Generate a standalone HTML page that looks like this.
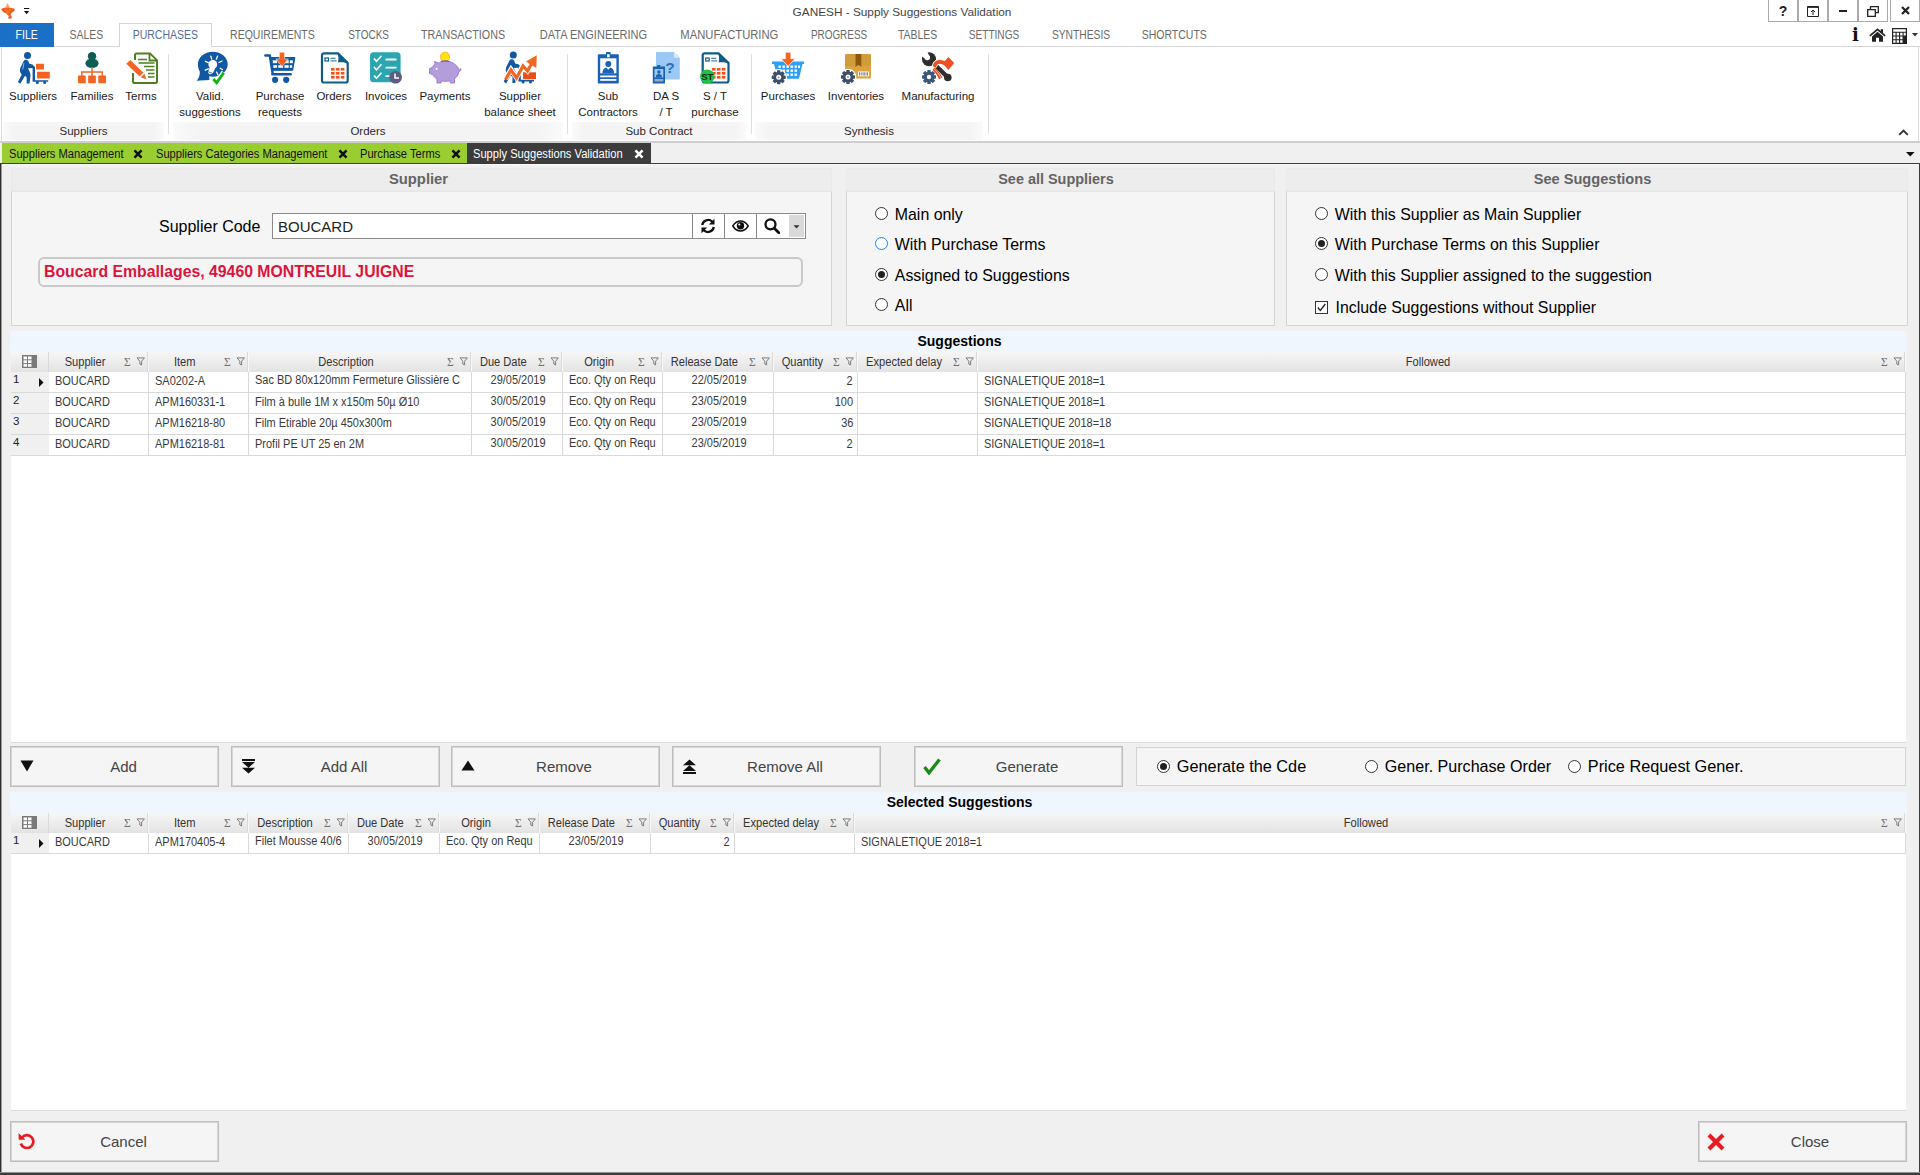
<!DOCTYPE html>
<html lang="en">
<head>
<meta charset="utf-8">
<title>GANESH - Supply Suggestions Validation</title>
<style>
*{box-sizing:border-box;margin:0;padding:0}
html,body{width:1920px;height:1175px;overflow:hidden;background:#f0f0f0;font-family:"Liberation Sans",sans-serif;color:#000}
.abs{position:absolute}
#app{position:relative;width:1920px;height:1175px;overflow:hidden;background:#f0f0f0}
/* title bar */
#titlebar{left:0;top:0;width:1920px;height:23px;background:#fff}
#title{left:0;top:5px;width:1804px;text-align:center;font-size:11.8px;color:#444;white-space:nowrap}
.wbtn{top:-1px;height:23px;width:30px;border:1px solid #ababab;background:#fff}
/* ribbon tabs */
#tabrow{left:0;top:23px;width:1920px;height:24px;background:#fff;border-bottom:1px solid #d4d4d4}
.rtab{top:0;height:24px;font-size:12px;color:#6a6a6a;white-space:nowrap;line-height:25px;text-align:center}
.rtab span{display:inline-block;transform:scaleX(.875);transform-origin:center}
#filetab{left:0;top:0;width:54px;height:24px;background:#1a6fc6;color:#fff}
#purtab{left:119px;top:0;width:93px;height:25px;background:#fff;border:1px solid #d4d4d4;border-bottom:none;color:#5a6d9a;line-height:23px}
/* ribbon body */
#ribbon{left:0;top:47px;width:1920px;height:94px;background:#fff}
#ribshadow{left:0;top:141px;width:1920px;height:2px;background:#cfcfcf}
.rbtn{top:0;text-align:center;font-size:11.5px;line-height:16px;color:#1a1a1a;white-space:nowrap}
.rbtn .lbl{position:absolute;left:-40px;right:-40px;top:41px;text-align:center}
.rbtn svg{position:absolute;top:5px;left:50%;margin-left:-16px;width:32px;height:32px}
.rgrp{top:75px;height:18px;background:linear-gradient(90deg,#fbfbfb,#f4f4f4 6%,#f4f4f4 94%,#fbfbfb);font-size:11.5px;line-height:19px;text-align:center;color:#2a2a2a}
.rsep{top:7px;width:1px;height:80px;background:#dedede}
/* doc tabs */
#doctabs{left:0;top:143px;width:1920px;height:21px;background:#f0f0f0;border-bottom:1px solid #3c3c3c}
.dtab{top:0;height:20px;background:#9acd32;font-size:12px;line-height:23px;white-space:nowrap;padding-left:7px;color:#111}
.dtab.act{background:#3c3c3c;color:#fff}
.dtab svg{position:absolute;top:6px;width:10px;height:10px;margin-left:.5px}
.dtab .sx{transform:scaleX(.928)}
/* panels */
.gph{padding-right:6px;background:#ededed;border:1px solid #eaeaea;font-weight:bold;font-size:14.8px;color:#646464;text-align:center;line-height:21px;height:23px}
.gpb{background:#f5f5f5;border:1px solid #d4d4d4;border-top-color:#e6e6e6}
.rad{width:13px;height:13px;border:1px solid #333;border-radius:50%;background:#fff}
.rad.on::after{content:"";position:absolute;left:2px;top:2px;width:7px;height:7px;border-radius:50%;background:#222}
.rl{font-size:15.9px;white-space:nowrap;line-height:22px;color:#000}
/* grids */
.gtitle{background:#eff6fe;font-weight:bold;font-size:14px;text-align:center;line-height:21px;height:21px;color:#000}
.ghead{height:20px;background:linear-gradient(#f6f6f6,#e3e3e3)}
.gh{top:0;height:20px;font-size:12px;line-height:20px;color:#333;white-space:nowrap;border-right:1px solid #f8f8f8;box-shadow:inset -2px 0 0 -1px #dadada}
.gh .t{position:absolute;top:0;left:0;text-align:center}
.gh svg{position:absolute;top:5px;width:22px;height:9px;right:2px}
.sx{display:inline-block;transform:scaleX(.915);transform-origin:left center}
.gh .sx,.gc.c .sx{transform-origin:center}
.gh .sx{transform:scaleX(.925)}
.gc.r .sx{transform-origin:right center}
.gbody{background:#fff;border-bottom:1px solid #dcdcdc}
.grow{left:0;height:21px;border-bottom:1px solid #d9d9d9}
.gc{top:0;height:20px;font-size:12px;line-height:19px;color:#3a3a3a;white-space:nowrap;overflow:hidden;border-right:1px solid #d9d9d9;padding:0 6px}
.gc.c{text-align:center;line-height:17px;padding:0 0 0 2px}
.gc.u{line-height:17px}
.gc.r{text-align:right;padding-right:4px}
.gc.rh{background:#f0f0f0;border-right:none;padding:0 0 0 2px;font-size:11.5px;line-height:14px;color:#222}
/* buttons */
.btn{height:41px;border:1px solid #bdbdbd;background:#f5f5f5;font-size:15px;color:#444;text-align:center;line-height:39px;white-space:nowrap;box-shadow:inset 0 0 0 1px #d6d6d6}
.btn svg{position:absolute}
</style>
</head>
<body>
<div id="app">

<!-- TITLE BAR -->
<div id="titlebar" class="abs">
  <svg class="abs" style="left:0;top:0;width:17px;height:21px" viewBox="0 0 17 21"><path d="M7.500 2.800L10.200 8.300H4.900z" fill="#f6a77f"/><path d="M1 9C2.800 7.800 4.800 7.600 7.500 7.700 10.200 7.600 12.800 7.800 15 9 14.600 10.800 13.500 12 12 12.800 11 13.500 10.500 14.300 10.700 15.200 11.700 15.800 12.200 17 11.500 18.200 10.500 19.200 8.800 19 8.200 18 8 17 8.600 16.300 9.600 16.500 8 15.500 7 14.300 6.500 13.500 4.500 13.300 2.300 11.800 1 9z" fill="#f2601e"/><path d="M5 10h1.600M8.800 10h1.600M6.500 12h2.500" stroke="#ffb347" stroke-width=".6"/></svg>
  <svg class="abs" style="left:24px;top:8px;width:6px;height:7px" viewBox="0 0 6 7"><path d="M0 0h5.200v1.100H0zM0 3h5.200L2.600 6.300z" fill="#111"/></svg>
  <div id="title" class="abs">GANESH - Supply Suggestions Validation</div>
  <div class="abs wbtn" style="left:1768px;text-align:center;font-weight:bold;font-size:14px;line-height:22px;color:#222">?</div>
  <div class="abs wbtn" style="left:1798px"><svg class="abs" style="left:8px;top:6px;width:12px;height:11px" viewBox="0 0 12 11"><path d="M.5.5h11v10H.5z" fill="none" stroke="#222"/><path d="M.5 1.200h11" stroke="#222" stroke-width="1.400"/><path d="M6 9V4.200M4 6l2-2 2 2" fill="none" stroke="#222" stroke-width="1"/></svg></div>
  <div class="abs wbtn" style="left:1828px"><div class="abs" style="left:10px;top:10px;width:8px;height:2px;background:#222"></div></div>
  <div class="abs wbtn" style="left:1858px"><svg class="abs" style="left:8px;top:6px;width:12px;height:11px" viewBox="0 0 12 11"><path d="M3.500 3V.7h7.800v6H9" fill="none" stroke="#222" stroke-width="1.300"/><path d="M.7 3.700h7.600v6.600H.7z" fill="#fff" stroke="#222" stroke-width="1.300"/></svg></div>
  <div class="abs wbtn" style="left:1890px"><svg class="abs" style="left:10px;top:6px;width:9px;height:9px" viewBox="0 0 9 9"><path d="M1 1l7 7M8 1L1 8" stroke="#222" stroke-width="2.200"/></svg></div>
</div>

<!-- RIBBON TAB ROW -->
<div id="tabrow" class="abs">
  <div class="abs" style="left:1849px;top:0;width:13px;height:24px;text-align:center;font-family:'DejaVu Serif',serif;font-weight:bold;font-size:18px;line-height:23px;color:#111">i</div>
  <svg class="abs" style="left:1869px;top:5px;width:17px;height:14px" viewBox="0 0 17 14"><path d="M8.500 .3L.3 7.300l1.100 1.200L8.500 2.600l7.100 5.900 1.100-1.200-2.700-2.300V1.200h-2.200v1.900z" fill="#222"/><path d="M8.500 3.800L3 8.400V13.700h4V9.700h3v4h4V8.400z" fill="#222"/></svg>
  <svg class="abs" style="left:1892px;top:5px;width:15px;height:16px" viewBox="0 0 15 16"><path d="M.6.600h13.800v14.800H.6z" fill="#fff" stroke="#222" stroke-width="1.200"/><path d="M.6 4.300h13.800M.6 8h13.800M.6 11.700h13.800M4.100 4.300v11M7.600 4.300v11M11.100 4.300v11" stroke="#222" stroke-width="1.100"/><rect x="11.100" y="8" width="3.300" height="7.400" fill="#222"/></svg>
  <svg class="abs" style="left:1912px;top:10px;width:6px;height:4px" viewBox="0 0 6 4"><path d="M0 0h6L3 3.500z" fill="#333"/></svg>
  <div id="filetab" class="abs rtab"><span>FILE</span></div>
  <div id="purtab" class="abs rtab"><span>PURCHASES</span></div>
  <div class="abs rtab" style="left:6.3px;width:160px"><span style="transform:scaleX(0.875)">SALES</span></div>
  <div class="abs rtab" style="left:192.2px;width:160px"><span style="transform:scaleX(0.875)">REQUIREMENTS</span></div>
  <div class="abs rtab" style="left:288.7px;width:160px"><span style="transform:scaleX(0.83)">STOCKS</span></div>
  <div class="abs rtab" style="left:383.0px;width:160px"><span style="transform:scaleX(0.895)">TRANSACTIONS</span></div>
  <div class="abs rtab" style="left:513.5px;width:160px"><span style="transform:scaleX(0.918)">DATA ENGINEERING</span></div>
  <div class="abs rtab" style="left:649.2px;width:160px"><span style="transform:scaleX(0.936)">MANUFACTURING</span></div>
  <div class="abs rtab" style="left:759.2px;width:160px"><span style="transform:scaleX(0.826)">PROGRESS</span></div>
  <div class="abs rtab" style="left:837.7px;width:160px"><span style="transform:scaleX(0.87)">TABLES</span></div>
  <div class="abs rtab" style="left:914.2px;width:160px"><span style="transform:scaleX(0.84)">SETTINGS</span></div>
  <div class="abs rtab" style="left:1001.2px;width:160px"><span style="transform:scaleX(0.855)">SYNTHESIS</span></div>
  <div class="abs rtab" style="left:1094.2px;width:160px"><span style="transform:scaleX(0.875)">SHORTCUTS</span></div>
</div>

<!-- RIBBON BODY -->
<div id="ribbon" class="abs">
  <div class="abs rbtn" style="left:17px;width:32px;height:70px"><svg viewBox="0 0 32 32" style="overflow:visible"><circle cx="10.5" cy="3.500" r="3.500" fill="#1058a3"/>
<path d="M7.500 8 C9 7.300 10.800 7.800 11.500 9.300 L12.300 11.800 L15.500 12.600 L17.800 15 L17.800 16 L11 16.300 L12.500 19.500 C13.300 21 13.600 23 13.400 25 L12.500 31.500 L9.600 31.500 L9.700 25.500 L8 23.800 L3.300 31.800 L0.900 30 L4.800 22.500 C3 21 2.600 18.500 3.300 16 L6.200 10 C6.500 9 7 8.400 7.500 8Z" fill="#1058a3"/>
<path d="M6.900 11.200 L5.800 17.500" stroke="#fff" stroke-width=".7" opacity=".8"/>
<path d="M15.600 14.800 h2.400 v13.400 h13.200 v1.600 h-15.600z" fill="#1058a3"/>
<circle cx="20.300" cy="30.500" r="1.500" fill="#1058a3"/><circle cx="27.700" cy="30.500" r="1.500" fill="#1058a3"/>
<rect x="19" y="11.700" width="8" height="5.700" rx=".5" fill="#f5621e"/>
<rect x="20" y="19.800" width="12.800" height="6.800" rx=".5" fill="#f5621e"/></svg><div class="lbl" style="left:-40px;right:-40px">Suppliers</div></div>
<div class="abs rbtn" style="left:76px;width:32px;height:70px"><svg viewBox="0 0 32 32" style="overflow:visible"><circle cx="16" cy="4.200" r="4.200" fill="#0e5e55"/>
<ellipse cx="16" cy="11.300" rx="6.600" ry="4.800" fill="#0e5e55"/>
<path d="M16 15v5M5.800 24v-4h20.400v4M16 20v4" fill="none" stroke="#f26522" stroke-width="1.500"/>
<rect x="2" y="23.500" width="7.700" height="7.700" rx=".7" fill="#f26522"/>
<rect x="12.150" y="23.500" width="7.700" height="7.700" rx=".7" fill="#f26522"/>
<rect x="22.300" y="23.500" width="7.700" height="7.700" rx=".7" fill="#f26522"/></svg><div class="lbl" style="left:-40px;right:-40px">Families</div></div>
<div class="abs rbtn" style="left:126px;width:32px;height:70px"><svg viewBox="0 0 32 32" style="overflow:visible"><path d="M9 8V3.200c0-1 .8-1.800 1.800-1.800H24l7 7v20.800c0 1-.8 1.800-1.800 1.800H8.800c-1 0-1.800-.8-1.800-1.800V21" fill="#fff" stroke="#4f8020" stroke-width="2"/>
<path d="M23.500 1.800v6.700H30.500" fill="none" stroke="#4f8020" stroke-width="1.800"/>
<path d="M12 7.500h9M12.500 11h16M18 14.500h10.500M20 18h8.500M22 21.500h6.500M22 25h6.500" stroke="#4f8020" stroke-width="1.500"/>
<path d="M0.300 11.800 L4.300 8 L17.500 20.800 L13.700 24.600Z" fill="#f26522"/>
<path d="M14.600 25.300 L18.300 21.600 L20.500 27.300Z" fill="#f26522"/>
<path d="M13.700 24.600 L17.500 20.800 L18.300 21.600 L14.600 25.300Z" fill="#fff"/></svg><div class="lbl" style="left:-41px;right:-39px">Terms</div></div>
<div class="abs rbtn" style="left:195.5px;width:32px;height:70px"><svg viewBox="0 0 32 32" style="overflow:visible"><path d="M16.800 -0.300 C25.200 -0.300 31.700 5.300 31.700 12.200 C31.700 19.100 25.200 24.700 16.800 24.700 C15.500 24.700 14.300 24.600 13.200 24.300 L13.400 28 L0.500 28.800 C2.800 26.500 4 23.500 3.800 19.500 C2.600 17.400 1.900 14.900 1.900 12.200 C1.900 5.300 8.400 -0.300 16.800 -0.300Z" fill="#1058a3"/>
<circle cx="16.800" cy="12.400" r="4.400" fill="#fff"/>
<path d="M13.800 15 L12 20.500 C12.500 22.500 15.500 23 16.800 21.300 L19.300 16Z" fill="#fff"/>
<path d="M12.200 19.800l5 1.800" stroke="#1058a3" stroke-width=".8"/>
<path d="M14.800 4.200l1 3M21.500 4.200l-1.200 3M9.300 9.300l3 1.400M26 9l-3 1.500M9.300 18.200l3-1.400M24.200 16.300l2.300 1.200M20.500 20l1.600 3" stroke="#fff" stroke-width="1.300" stroke-linecap="round"/>
<path d="M17 26.800 L20.600 31 L28 20.300" fill="none" stroke="#fff" stroke-width="5.600"/>
<path d="M17.300 27 L20.600 30.800 L27.800 20.600" fill="none" stroke="#12b012" stroke-width="2.800"/></svg><div class="lbl" style="left:-41.5px;right:-38.5px">Valid.<br>suggestions</div></div>
<div class="abs rbtn" style="left:264px;width:32px;height:70px"><svg viewBox="0 0 32 32" style="overflow:visible"><path d="M1.300 3.500 H5.800 L8.600 21" fill="none" stroke="#1058a3" stroke-width="2.400" stroke-linecap="round" stroke-linejoin="round"/>
<path d="M6 5.500 H30.900 L28.700 18.300 H8.200z" fill="#1058a3" stroke="#1058a3" stroke-width="1" stroke-linejoin="round"/>
<g fill="#fff"><rect x="8.800" y="8.300" width="4.300" height="2.900"/><rect x="14.300" y="8.300" width="4.800" height="2.900"/><rect x="20.400" y="8.300" width="4.300" height="2.900"/><rect x="25.800" y="8.300" width="3" height="2.900"/>
<rect x="9.300" y="13.200" width="3.800" height="2.600"/><rect x="14.300" y="13.200" width="4.800" height="2.600"/><rect x="20.400" y="13.200" width="4.300" height="2.600"/><rect x="25.800" y="13.200" width="2.300" height="2.600"/></g>
<path d="M8.500 22.200H26.500" stroke="#1058a3" stroke-width="2.600" stroke-linecap="round"/>
<circle cx="11.100" cy="27.800" r="3.100" fill="#1058a3"/><circle cx="22.200" cy="27.800" r="3.100" fill="#1058a3"/>
<path d="M15.400 .3h5.200v6.600h3.700L18 14.600 12 6.900h3.400z" fill="#f5621e" stroke="#fff" stroke-width=".5"/></svg><div class="lbl" style="left:-40px;right:-40px">Purchase<br>requests</div></div>
<div class="abs rbtn" style="left:318px;width:32px;height:70px"><svg viewBox="0 0 32 32" style="overflow:visible"><path d="M6 1.300H20L29.700 11V28.500a2 2 0 0 1-2 2H6a2 2 0 0 1-2-2V3.300a2 2 0 0 1 2-2z" fill="#fff" stroke="#0f5c88" stroke-width="2.200"/>
<path d="M19 .5 L30.500 12 C27 9.800 23 10 20 10.500 C20.500 7.500 21 4 19 .5z" fill="#0f5c88"/>
<rect x="7" y="6" width="3.500" height="3" fill="#fff" stroke="#0f5c88" stroke-width="1.200"/>
<path d="M12.500 6.300h5M12.500 8.800h6" stroke="#0f5c88" stroke-width="1.200" opacity=".75"/>
<g fill="#f4511e"><rect x="13" y="16" width="3.600" height="2.600"/><rect x="17.900" y="16" width="3.600" height="2.600"/><rect x="22.800" y="16" width="3.600" height="2.600"/>
<rect x="13" y="20" width="3.600" height="2.600"/><rect x="17.900" y="20" width="3.600" height="2.600"/><rect x="22.800" y="20" width="3.600" height="2.600"/>
<rect x="13" y="24" width="3.600" height="2.600"/><rect x="17.900" y="24" width="3.600" height="2.600"/><rect x="22.800" y="24" width="3.600" height="2.600"/></g></svg><div class="lbl" style="left:-40px;right:-40px">Orders</div></div>
<div class="abs rbtn" style="left:370px;width:32px;height:70px"><svg viewBox="0 0 32 32" style="overflow:visible"><rect x="0" y=".3" width="30.600" height="30" rx="3.500" fill="#2ba6b1"/>
<path d="M4 6.500l2.500 2.800 5-5.500M4 15l2.500 2.800 5-5.500M4 23.500l2.500 2.800 5-5.500" fill="none" stroke="#fff" stroke-width="1.600"/>
<path d="M15.500 7.500h11M15.500 15.700h11M15.500 24.200h5" stroke="#fff" stroke-width="1.800"/>
<circle cx="25.600" cy="25.300" r="6.300" fill="#5b5d82"/>
<path d="M25 21.500v4.600h4" fill="none" stroke="#fff" stroke-width="1.500"/></svg><div class="lbl" style="left:-40px;right:-40px">Invoices</div></div>
<div class="abs rbtn" style="left:429px;width:32px;height:70px"><svg viewBox="0 0 32 32" style="overflow:visible"><circle cx="16" cy="4.800" r="4.600" fill="#ffe600" stroke="#f5b83c" stroke-width="1"/>
<path d="M5.500 9.500 L9.500 11 C12 9.300 20 8.600 24 11 C28 13.200 29.500 16 29.800 18 C31 18 31.500 16.500 32 16.800 C32 19 30.500 19.800 29.800 19.800 C29.500 23 27.500 25.500 25.500 26.800 L25.500 31 L21.500 31 L21 28.800 C18 29.600 14.500 29.500 12.500 28.800 L12 31 L8 31 L8 27 C5.500 25.500 4 23.500 3.500 22.500 L0.500 21.500 L0.500 16.500 L3.300 15.500 C4 14 5 12.800 6 12 Z" fill="#b39ddb" stroke="#9575cd" stroke-width=".9" stroke-linejoin="round"/>
<path d="M12 9.600c2.500-.8 6-.8 8.500 0" stroke="#7e57c2" stroke-width="1.200" fill="none"/>
<circle cx="7.700" cy="16.800" r="1.100" fill="#fff"/></svg><div class="lbl" style="left:-40px;right:-40px">Payments</div></div>
<div class="abs rbtn" style="left:504px;width:32px;height:70px"><svg viewBox="0 0 32 32" style="overflow:visible"><g transform="translate(-1.2,-.4)"><circle cx="10.5" cy="3.500" r="3.500" fill="#1058a3"/>
<path d="M7.500 8 C9 7.300 10.800 7.800 11.500 9.300 L12.300 11.800 L15.500 12.600 L17.800 15 L17.800 16 L11 16.300 L12.500 19.500 C13.300 21 13.600 23 13.400 25 L12.500 31.500 L9.600 31.500 L9.700 25.500 L8 23.800 L3.300 31.800 L0.900 30 L4.800 22.500 C3 21 2.600 18.500 3.300 16 L6.200 10 C6.500 9 7 8.400 7.500 8Z" fill="#1058a3"/>
<path d="M15.600 14.800 h2.400 v13.400 h13.200 v1.600 h-15.600z" fill="#1058a3"/>
<circle cx="20.300" cy="30.500" r="1.500" fill="#1058a3"/><circle cx="27.700" cy="30.500" r="1.500" fill="#1058a3"/></g>
<rect x="19" y="20.300" width="13" height="6.700" fill="#e8501a"/>
<path d="M1.500 27 L7 17.500 L12.500 25.500 L19 13.500 L23.500 18.500 L28.500 9.500" fill="none" stroke="#fff" stroke-width="5.200"/>
<path d="M1.500 27.500 L7 18 L12.500 26 L19 14 L23.500 19 L28.500 10" fill="none" stroke="#f26522" stroke-width="3.200"/>
<path d="M22 9.500 L32.800 3.200 L32.300 16Z" fill="#f26522"/></svg><div class="lbl" style="left:-40px;right:-40px">Supplier<br>balance sheet</div></div>
<div class="abs rbtn" style="left:592px;width:32px;height:70px"><svg viewBox="0 0 32 32" style="overflow:visible"><rect x="14" y="0" width="4.600" height="5.500" fill="#1b62b5"/>
<rect x="5.800" y="2.300" width="21" height="29.200" rx="1" fill="#1b62b5"/>
<rect x="15" y="2.300" width="2.600" height="3" fill="#fff"/>
<rect x="8.200" y="6.300" width="16.200" height="15" fill="#fff"/>
<circle cx="16.300" cy="12" r="3" fill="#1b62b5"/>
<path d="M10.500 21.300c0-4 2-5.500 4-5.500l1.800 2 1.800-2c2 0 4 1.500 4 5.500z" fill="#1b62b5"/>
<rect x="8.200" y="23.500" width="16.200" height="1.800" fill="#fff"/><rect x="8.200" y="27" width="16.200" height="1.800" fill="#fff"/></svg><div class="lbl" style="left:-40px;right:-40px">Sub<br>Contractors</div></div>
<div class="abs rbtn" style="left:650px;width:32px;height:70px"><svg viewBox="0 0 32 32" style="overflow:visible"><path d="M6 0H24L29.800 5.800V27.500H6z" fill="#9cc8f5"/>
<path d="M24 0v5.800h5.800z" fill="#d6e9fb"/>
<text x="20" y="21.200" font-family="Liberation Sans,sans-serif" font-weight="bold" font-size="15.500" text-anchor="middle" fill="#2e6fb8">?</text>
<rect x="7.300" y="13" width="3" height="3" fill="#1b62b5"/>
<rect x="2.800" y="14.500" width="12.200" height="17" fill="#1b62b5"/>
<rect x="4.500" y="17" width="8.800" height="8.500" fill="#9cc8f5"/>
<circle cx="8.900" cy="20" r="1.700" fill="#1b62b5"/><path d="M5.800 25.500c0-2.500 1.300-3.400 3.100-3.400s3.100.9 3.100 3.400z" fill="#1b62b5"/>
<rect x="4.500" y="27" width="8.800" height="2.500" fill="#9aa9bd"/></svg><div class="lbl" style="left:-40px;right:-40px">DA S<br>/ T</div></div>
<div class="abs rbtn" style="left:699px;width:32px;height:70px"><svg viewBox="0 0 32 32" style="overflow:visible"><path d="M5.700 1.300H19.500L29.500 11V28.500a2 2 0 0 1-2 2H5.700a2 2 0 0 1-2-2V3.300a2 2 0 0 1 2-2z" fill="#fff" stroke="#0f5c88" stroke-width="2.200"/>
<path d="M18.500 .5 L30.300 12 C27 9.800 23 10 19.700 10.500 C20.200 7.500 20.700 4 18.500 .5z" fill="#0f5c88"/>
<rect x="6.700" y="6" width="3.500" height="3" fill="#fff" stroke="#0f5c88" stroke-width="1.200"/>
<path d="M12.200 6.300h5M12.200 8.800h6" stroke="#0f5c88" stroke-width="1.200" opacity=".75"/>
<g fill="#f4511e"><rect x="13" y="16" width="3.600" height="2.600"/><rect x="17.900" y="16" width="3.600" height="2.600"/><rect x="22.800" y="16" width="3.600" height="2.600"/>
<rect x="13" y="20" width="3.600" height="2.600"/><rect x="17.900" y="20" width="3.600" height="2.600"/><rect x="22.800" y="20" width="3.600" height="2.600"/>
<rect x="13" y="24" width="3.600" height="2.600"/><rect x="17.900" y="24" width="3.600" height="2.600"/><rect x="22.800" y="24" width="3.600" height="2.600"/></g>
<circle cx="8.300" cy="24.600" r="7.200" fill="#1cc14a"/>
<text x="8.300" y="28.200" font-family="Liberation Sans,sans-serif" font-weight="bold" font-size="9.500" text-anchor="middle" fill="#0a2a12">ST</text></svg><div class="lbl" style="left:-40px;right:-40px">S / T<br>purchase</div></div>
<div class="abs rbtn" style="left:772px;width:32px;height:70px"><svg viewBox="0 0 32 32" style="overflow:visible"><path d="M0 9.500H32V12H30.500L27 26.800H6L2 12H0z" fill="#2f9ef5"/>
<g fill="#fff"><rect x="6.500" y="13.500" width="2.400" height="2.400"/><rect x="10.500" y="13.500" width="2.400" height="2.400"/><rect x="14.500" y="13.500" width="2.400" height="2.400"/><rect x="18.500" y="13.500" width="2.400" height="2.400"/><rect x="22.500" y="13.500" width="2.400" height="2.400"/><rect x="26" y="13.500" width="2" height="2.400"/>
<rect x="10.500" y="17.500" width="2.400" height="2.400"/><rect x="14.500" y="17.500" width="2.400" height="2.400"/><rect x="18.500" y="17.500" width="2.400" height="2.400"/><rect x="22.500" y="17.500" width="2.400" height="2.400"/>
<rect x="14.500" y="21.500" width="2.400" height="2.400"/><rect x="18.500" y="21.500" width="2.400" height="2.400"/><rect x="22.500" y="21.500" width="2.400" height="2.400"/></g>
<path d="M13.300 .3h5.600v6.400h4.300L16.100 14.300 9 6.700h4.300z" fill="#f26522" stroke="#fff" stroke-width=".7"/>
<circle cx="6.700" cy="25.300" r="8.300" fill="#fff"/><path d="M13.10 24.18 L13.10 26.42 L11.46 26.44 L10.88 27.86 L12.02 29.04 L10.44 30.62 L9.26 29.48 L7.84 30.06 L7.82 31.70 L5.58 31.70 L5.56 30.06 L4.14 29.48 L2.96 30.62 L1.38 29.04 L2.52 27.86 L1.94 26.44 L0.30 26.42 L0.30 24.18 L1.94 24.16 L2.52 22.74 L1.38 21.56 L2.96 19.98 L4.14 21.12 L5.56 20.54 L5.58 18.90 L7.82 18.90 L7.84 20.54 L9.26 21.12 L10.44 19.98 L12.02 21.56 L10.88 22.74 L11.46 24.16Z" fill="#3d4f66" stroke="#3d4f66" stroke-width="1.2" stroke-linejoin="round"/><circle cx="6.7" cy="25.3" r="2.5" fill="#fff"/><circle cx="6.7" cy="25.3" r="1.1" fill="#9aa4b0"/></svg><div class="lbl" style="left:-40px;right:-40px">Purchases</div></div>
<div class="abs rbtn" style="left:840px;width:32px;height:70px"><svg viewBox="0 0 32 32" style="overflow:visible"><rect x="5" y="2" width="26" height="24.600" rx="1.500" fill="#dba441"/>
<rect x="5" y="2" width="26" height="12" rx="1.500" fill="#d19c3c"/>
<path d="M15.500 2h5.800v13l-2.900-2.200-2.900 2.200z" fill="#8d5a0b"/>
<rect x="18" y="19.500" width="11" height="4.800" fill="#fff"/>
<path d="M19.500 20.300v3.200M21.200 20.300v3.200M23 20.300v3.200M24.300 20.300v3.200M26 20.300v3.200M27.500 20.300v3.200" stroke="#777" stroke-width=".9"/>
<circle cx="8" cy="25" r="8.300" fill="#fff"/><path d="M14.40 23.88 L14.40 26.12 L12.76 26.14 L12.18 27.56 L13.32 28.74 L11.74 30.32 L10.56 29.18 L9.14 29.76 L9.12 31.40 L6.88 31.40 L6.86 29.76 L5.44 29.18 L4.26 30.32 L2.68 28.74 L3.82 27.56 L3.24 26.14 L1.60 26.12 L1.60 23.88 L3.24 23.86 L3.82 22.44 L2.68 21.26 L4.26 19.68 L5.44 20.82 L6.86 20.24 L6.88 18.60 L9.12 18.60 L9.14 20.24 L10.56 20.82 L11.74 19.68 L13.32 21.26 L12.18 22.44 L12.76 23.86Z" fill="#3d4f66" stroke="#3d4f66" stroke-width="1.2" stroke-linejoin="round"/><circle cx="8" cy="25" r="2.5" fill="#fff"/><circle cx="8" cy="25" r="1.1" fill="#9aa4b0"/></svg><div class="lbl" style="left:-40px;right:-40px">Inventories</div></div>
<div class="abs rbtn" style="left:922px;width:32px;height:70px"><svg viewBox="0 0 32 32" style="overflow:visible"><circle cx="7" cy="7.300" r="7" fill="#2e2e2e"/>
<circle cx="5.300" cy="5.500" r="2.700" fill="#fff"/>
<path d="M5.300 8.200 L-1.500 3.500 L4.500 -2 L8 5.500Z" fill="#fff"/>
<path d="M11 11 L25.800 25.300" stroke="#2e2e2e" stroke-width="4.400" stroke-linecap="round"/>
<circle cx="25.800" cy="25.500" r="3.800" fill="#2e2e2e"/>
<path d="M19 9.800 C17 9.600 15.500 10 14.800 10.600 C13.600 11.300 13 12.200 12.800 13.300" fill="none" stroke="#fff" stroke-width="5.400" stroke-linecap="round"/>
<path d="M26.300 5 L32.200 11.100 L26.300 18 L20.800 11.600Z" fill="#f04e23"/>
<path d="M24 11.800 C20.500 9.600 16.500 9.600 14.800 10.600 C13.600 11.300 13 12.200 12.800 13.300" fill="none" stroke="#f04e23" stroke-width="3.800" stroke-linecap="round"/>
<path d="M12.300 15.800 C14.500 17 17.500 20.500 20.500 25.500 L17 27.300 C15.500 23.500 13.500 20.500 10.500 18Z" fill="#f04e23"/>
<path d="M12.500 17.500 C15 19.500 17 22 18.800 25.800" stroke="#fff" stroke-width=".6" fill="none"/><path d="M13.40 23.88 L13.40 26.12 L11.76 26.14 L11.18 27.56 L12.32 28.74 L10.74 30.32 L9.56 29.18 L8.14 29.76 L8.12 31.40 L5.88 31.40 L5.86 29.76 L4.44 29.18 L3.26 30.32 L1.68 28.74 L2.82 27.56 L2.24 26.14 L0.60 26.12 L0.60 23.88 L2.24 23.86 L2.82 22.44 L1.68 21.26 L3.26 19.68 L4.44 20.82 L5.86 20.24 L5.88 18.60 L8.12 18.60 L8.14 20.24 L9.56 20.82 L10.74 19.68 L12.32 21.26 L11.18 22.44 L11.76 23.86Z" fill="#3a5878" stroke="#3a5878" stroke-width="1.2" stroke-linejoin="round"/><circle cx="7" cy="25" r="2.1999999999999997" fill="#fff"/></svg><div class="lbl" style="left:-40px;right:-40px">Manufacturing</div></div>
<div class="abs rgrp" style="left:3px;width:161px">Suppliers</div>
<div class="abs rgrp" style="left:173px;width:390px">Orders</div>
<div class="abs rgrp" style="left:572px;width:174px">Sub Contract</div>
<div class="abs rgrp" style="left:755px;width:228px">Synthesis</div>
<div class="abs rsep" style="left:168px"></div>
<div class="abs rsep" style="left:567px"></div>
<div class="abs rsep" style="left:751px"></div>
<div class="abs rsep" style="left:988px"></div>
<svg class="abs" style="left:1898px;top:82px;width:11px;height:7px" viewBox="0 0 11 7"><path d="M1.200 5.800L5.500 1.500 9.800 5.800" fill="none" stroke="#333" stroke-width="1.900"/></svg>
</div>
<div id="ribshadow" class="abs"></div>
<div class="abs" style="left:1px;top:47px;width:1px;height:94px;background:#dcdcdc"></div><div class="abs" style="left:1918px;top:47px;width:1px;height:94px;background:#dcdcdc"></div>

<!-- DOC TABS -->
<div id="doctabs" class="abs">
  <div class="abs dtab" style="left:2px;width:465px"></div>
<div class="abs dtab" style="left:2px;width:147px"><span class="sx">Suppliers Management</span><svg viewBox="0 0 9 9" style="left:130px"><path d="M1.300 1.300l6.400 6.400M7.700 1.300L1.300 7.700" stroke="#111" stroke-width="2.300"/></svg></div>
<div class="abs dtab" style="left:149px;width:204px"><span class="sx">Suppliers Categories Management</span><svg viewBox="0 0 9 9" style="left:188px"><path d="M1.300 1.300l6.400 6.400M7.700 1.300L1.300 7.700" stroke="#111" stroke-width="2.300"/></svg></div>
<div class="abs dtab" style="left:353px;width:114px"><span class="sx">Purchase Terms</span><svg viewBox="0 0 9 9" style="left:97px"><path d="M1.300 1.300l6.400 6.400M7.700 1.300L1.300 7.700" stroke="#111" stroke-width="2.300"/></svg></div>
<div class="abs dtab act" style="left:467px;width:184px;padding-left:6px"><span class="sx">Supply Suggestions Validation</span><svg viewBox="0 0 9 9" style="left:166px"><path d="M1.300 1.300l6.400 6.400M7.700 1.300L1.300 7.700" stroke="#fff" stroke-width="2.300"/></svg></div>
<svg class="abs" style="left:1906px;top:9px;width:9px;height:5px" viewBox="0 0 9 5"><path d="M0 0h8.500L4.250 4.500z" fill="#111"/></svg>
</div>

<!-- CONTENT -->
<div class="abs gph" style="left:11px;top:168px;width:821px;font-size:14.8px;padding-right:6px">Supplier</div>
<div class="abs gpb" style="left:11px;top:191px;width:821px;height:135px"></div>
<div class="abs gph" style="left:846px;top:168px;width:429px;font-size:14.45px;padding-right:9px">See all Suppliers</div>
<div class="abs gpb" style="left:846px;top:191px;width:429px;height:135px"></div>
<div class="abs gph" style="left:1286px;top:168px;width:622px;font-size:14.6px;padding-right:9px">See Suggestions</div>
<div class="abs gpb" style="left:1286px;top:191px;width:622px;height:135px"></div>
<div class="abs" style="left:159px;top:217px;font-size:16px;line-height:20px;white-space:nowrap">Supplier Code</div>
<div class="abs" style="left:272px;top:213px;width:534px;height:26px;background:#fff;border:1px solid #8a8a8a"></div>
<div class="abs" style="left:278px;top:216.5px;font-size:15px;line-height:20px;color:#222;white-space:nowrap">BOUCARD</div>
<div class="abs" style="left:692px;top:214px;width:1px;height:24px;background:#8a8a8a"></div>
<div class="abs" style="left:724px;top:214px;width:1px;height:24px;background:#8a8a8a"></div>
<div class="abs" style="left:756px;top:214px;width:1px;height:24px;background:#8a8a8a"></div>
<div class="abs" style="left:789px;top:215px;width:15px;height:22px;background:#d9d9d9"></div>
<svg class="abs" style="left:793px;top:225px;width:7px;height:4px" viewBox="0 0 7 4"><path d="M.5 .3h6L3.500 3.600z" fill="#333"/></svg>
<svg class="abs" style="left:700px;top:218px;width:16px;height:16px" viewBox="0 0 16 16"><path d="M2.200 7A6 6 0 0 1 12.300 3.700" fill="none" stroke="#111" stroke-width="2.300"/><path d="M14.500 .8v5.700H8.800z" fill="#111"/><path d="M13.800 9A6 6 0 0 1 3.700 12.300" fill="none" stroke="#111" stroke-width="2.300"/><path d="M1.500 15.200V9.500h5.700z" fill="#111"/></svg>
<svg class="abs" style="left:732px;top:220px;width:17px;height:12px" viewBox="0 0 17 12"><path d="M.8 6C3 2.500 5.800 1 8.500 1s5.500 1.500 7.700 5c-2.200 3.500-5 5-7.700 5S3 9.500.8 6z" fill="#fff" stroke="#111" stroke-width="1.500"/><circle cx="8.500" cy="5.800" r="3.700" fill="#111"/><circle cx="7.300" cy="4.500" r="1.100" fill="#fff"/></svg>
<svg class="abs" style="left:764px;top:218px;width:16px;height:16px" viewBox="0 0 16 16"><circle cx="6.500" cy="6.300" r="5" fill="none" stroke="#111" stroke-width="2.300"/><path d="M10.300 10.300l4.500 4.500" stroke="#111" stroke-width="2.800" stroke-linecap="round"/></svg>
<div class="abs" style="left:38px;top:257px;width:765px;height:30px;border:2px solid #c9c9c9;border-radius:6px;background:#f5f5f5"></div>
<div class="abs" style="left:44px;top:262px;font-size:15.8px;line-height:20px;font-weight:bold;color:#dc143c;white-space:nowrap">Boucard Emballages, 49460 MONTREUIL JUIGNE</div>
<div class="abs rad" style="left:875.0px;top:207.0px;"></div>
<div class="abs rl" style="left:894.8px;top:203.5px">Main only</div>
<div class="abs rad" style="left:875.0px;top:237.0px;border-color:#1e88e5;"></div>
<div class="abs rl" style="left:894.8px;top:233.5px">With Purchase Terms</div>
<div class="abs rad on" style="left:875.0px;top:268.0px;"></div>
<div class="abs rl" style="left:894.8px;top:264.5px">Assigned to Suggestions</div>
<div class="abs rad" style="left:875.0px;top:298.0px;"></div>
<div class="abs rl" style="left:894.8px;top:294.5px">All</div>
<div class="abs rad" style="left:1315.0px;top:207.0px;"></div>
<div class="abs rl" style="left:1334.8px;top:203.5px">With this Supplier as Main Supplier</div>
<div class="abs rad on" style="left:1315.0px;top:237.0px;"></div>
<div class="abs rl" style="left:1334.8px;top:233.5px">With Purchase Terms on this Supplier</div>
<div class="abs rad" style="left:1315.0px;top:268.0px;"></div>
<div class="abs rl" style="left:1334.8px;top:264.5px">With this Supplier assigned to the suggestion</div>
<div class="abs" style="left:1315px;top:301px;width:13px;height:13px;border:1px solid #333;background:#fff"></div>
<svg class="abs" style="left:1316px;top:302px;width:11px;height:11px" viewBox="0 0 11 11"><path d="M1.800 5.500l2.500 3L9.300 2" fill="none" stroke="#222" stroke-width="1.300"/></svg>
<div class="abs rl" style="left:1335.500px;top:297px">Include Suggestions without Supplier</div>
<div class="abs gtitle" style="left:10px;top:331px;width:1897px;padding-left:2px">Suggestions</div>
<div class="abs gbody" style="left:11px;top:352px;width:1895px;height:391px"></div>
<div class="abs ghead" style="left:11px;top:352px;width:1895px">
<div class="abs gh" style="left:0;width:38px;border:none"><svg viewBox="0 0 15 13" style="left:11px;top:3px;width:15px;height:13px"><rect x="0" y="0" width="15" height="13" fill="#7a7a7a"/><g fill="#fff"><rect x="1.500" y="1.500" width="3.500" height="2.800"/><rect x="6" y="1.500" width="3.500" height="2.800"/><rect x="1.500" y="5.300" width="3.500" height="2.800"/><rect x="6" y="5.300" width="3.500" height="2.800"/><rect x="1.500" y="9.100" width="3.500" height="2.600"/><rect x="6" y="9.100" width="3.500" height="2.600"/></g></svg></div>
<div class="abs gh" style="left:38px;width:100px"><div class="t" style="width:72px"><span class="sx">Supplier</span></div><svg viewBox="0 0 22 9"><text x="0" y="8.600" font-family="Liberation Serif,serif" font-size="11.5" fill="#707070">Σ</text><path d="M13 .9h7.400L17.600 4.200v3.800l-1.800-1V4.200z" fill="none" stroke="#7d7d7d" stroke-width="1"/></svg></div>
<div class="abs gh" style="left:138px;width:100px"><div class="t" style="width:72px"><span class="sx">Item</span></div><svg viewBox="0 0 22 9"><text x="0" y="8.600" font-family="Liberation Serif,serif" font-size="11.5" fill="#707070">Σ</text><path d="M13 .9h7.400L17.600 4.200v3.800l-1.800-1V4.200z" fill="none" stroke="#7d7d7d" stroke-width="1"/></svg></div>
<div class="abs gh" style="left:238px;width:223px"><div class="t" style="width:195px"><span class="sx">Description</span></div><svg viewBox="0 0 22 9"><text x="0" y="8.600" font-family="Liberation Serif,serif" font-size="11.5" fill="#707070">Σ</text><path d="M13 .9h7.400L17.600 4.200v3.800l-1.800-1V4.200z" fill="none" stroke="#7d7d7d" stroke-width="1"/></svg></div>
<div class="abs gh" style="left:461px;width:91px"><div class="t" style="width:63px"><span class="sx">Due Date</span></div><svg viewBox="0 0 22 9"><text x="0" y="8.600" font-family="Liberation Serif,serif" font-size="11.5" fill="#707070">Σ</text><path d="M13 .9h7.400L17.600 4.200v3.800l-1.800-1V4.200z" fill="none" stroke="#7d7d7d" stroke-width="1"/></svg></div>
<div class="abs gh" style="left:552px;width:100px"><div class="t" style="width:72px"><span class="sx">Origin</span></div><svg viewBox="0 0 22 9"><text x="0" y="8.600" font-family="Liberation Serif,serif" font-size="11.5" fill="#707070">Σ</text><path d="M13 .9h7.400L17.600 4.200v3.800l-1.800-1V4.200z" fill="none" stroke="#7d7d7d" stroke-width="1"/></svg></div>
<div class="abs gh" style="left:652px;width:111px"><div class="t" style="width:83px"><span class="sx">Release Date</span></div><svg viewBox="0 0 22 9"><text x="0" y="8.600" font-family="Liberation Serif,serif" font-size="11.5" fill="#707070">Σ</text><path d="M13 .9h7.400L17.600 4.200v3.800l-1.800-1V4.200z" fill="none" stroke="#7d7d7d" stroke-width="1"/></svg></div>
<div class="abs gh" style="left:763px;width:84px"><div class="t" style="width:56px"><span class="sx">Quantity</span></div><svg viewBox="0 0 22 9"><text x="0" y="8.600" font-family="Liberation Serif,serif" font-size="11.5" fill="#707070">Σ</text><path d="M13 .9h7.400L17.600 4.200v3.800l-1.800-1V4.200z" fill="none" stroke="#7d7d7d" stroke-width="1"/></svg></div>
<div class="abs gh" style="left:847px;width:120px"><div class="t" style="width:92px"><span class="sx">Expected delay</span></div><svg viewBox="0 0 22 9"><text x="0" y="8.600" font-family="Liberation Serif,serif" font-size="11.5" fill="#707070">Σ</text><path d="M13 .9h7.400L17.600 4.200v3.800l-1.800-1V4.200z" fill="none" stroke="#7d7d7d" stroke-width="1"/></svg></div>
<div class="abs gh" style="left:967px;width:928px"><div class="t" style="width:900px"><span class="sx">Followed</span></div><svg viewBox="0 0 22 9"><text x="0" y="8.600" font-family="Liberation Serif,serif" font-size="11.5" fill="#707070">Σ</text><path d="M13 .9h7.400L17.600 4.200v3.800l-1.800-1V4.200z" fill="none" stroke="#7d7d7d" stroke-width="1"/></svg></div>
</div>
<div class="abs grow" style="left:11px;top:372px;width:1895px">
<div class="abs gc rh" style="left:0;width:38px">1<svg class="abs" style="left:28px;top:6px;width:5px;height:9px" viewBox="0 0 5 9"><path d="M0 0l4.500 4.500L0 9z" fill="#111"/></svg></div>
<div class="abs gc " style="left:38px;width:100px"><span class="sx">BOUCARD</span></div>
<div class="abs gc " style="left:138px;width:100px"><span class="sx">SA0202-A</span></div>
<div class="abs gc u" style="left:238px;width:223px"><span class="sx">Sac BD 80x120mm Fermeture Glissière C</span></div>
<div class="abs gc c" style="left:461px;width:91px"><span class="sx">29/05/2019</span></div>
<div class="abs gc u" style="left:552px;width:100px"><span class="sx">Eco. Qty on Requ</span></div>
<div class="abs gc c" style="left:652px;width:111px"><span class="sx">22/05/2019</span></div>
<div class="abs gc r" style="left:763px;width:84px"><span class="sx">2</span></div>
<div class="abs gc " style="left:847px;width:120px"><span class="sx"></span></div>
<div class="abs gc " style="left:967px;width:928px"><span class="sx">SIGNALETIQUE 2018=1</span></div>
</div>
<div class="abs grow" style="left:11px;top:393px;width:1895px">
<div class="abs gc rh" style="left:0;width:38px">2</div>
<div class="abs gc " style="left:38px;width:100px"><span class="sx">BOUCARD</span></div>
<div class="abs gc " style="left:138px;width:100px"><span class="sx">APM160331-1</span></div>
<div class="abs gc " style="left:238px;width:223px"><span class="sx">Film à bulle 1M x x150m 50µ Ø10</span></div>
<div class="abs gc c" style="left:461px;width:91px"><span class="sx">30/05/2019</span></div>
<div class="abs gc u" style="left:552px;width:100px"><span class="sx">Eco. Qty on Requ</span></div>
<div class="abs gc c" style="left:652px;width:111px"><span class="sx">23/05/2019</span></div>
<div class="abs gc r" style="left:763px;width:84px"><span class="sx">100</span></div>
<div class="abs gc " style="left:847px;width:120px"><span class="sx"></span></div>
<div class="abs gc " style="left:967px;width:928px"><span class="sx">SIGNALETIQUE 2018=1</span></div>
</div>
<div class="abs grow" style="left:11px;top:414px;width:1895px">
<div class="abs gc rh" style="left:0;width:38px">3</div>
<div class="abs gc " style="left:38px;width:100px"><span class="sx">BOUCARD</span></div>
<div class="abs gc " style="left:138px;width:100px"><span class="sx">APM16218-80</span></div>
<div class="abs gc " style="left:238px;width:223px"><span class="sx">Film Etirable 20µ 450x300m</span></div>
<div class="abs gc c" style="left:461px;width:91px"><span class="sx">30/05/2019</span></div>
<div class="abs gc u" style="left:552px;width:100px"><span class="sx">Eco. Qty on Requ</span></div>
<div class="abs gc c" style="left:652px;width:111px"><span class="sx">23/05/2019</span></div>
<div class="abs gc r" style="left:763px;width:84px"><span class="sx">36</span></div>
<div class="abs gc " style="left:847px;width:120px"><span class="sx"></span></div>
<div class="abs gc " style="left:967px;width:928px"><span class="sx">SIGNALETIQUE 2018=18</span></div>
</div>
<div class="abs grow" style="left:11px;top:435px;width:1895px">
<div class="abs gc rh" style="left:0;width:38px">4</div>
<div class="abs gc " style="left:38px;width:100px"><span class="sx">BOUCARD</span></div>
<div class="abs gc " style="left:138px;width:100px"><span class="sx">APM16218-81</span></div>
<div class="abs gc " style="left:238px;width:223px"><span class="sx">Profil PE UT 25 en 2M</span></div>
<div class="abs gc c" style="left:461px;width:91px"><span class="sx">30/05/2019</span></div>
<div class="abs gc u" style="left:552px;width:100px"><span class="sx">Eco. Qty on Requ</span></div>
<div class="abs gc c" style="left:652px;width:111px"><span class="sx">23/05/2019</span></div>
<div class="abs gc r" style="left:763px;width:84px"><span class="sx">2</span></div>
<div class="abs gc " style="left:847px;width:120px"><span class="sx"></span></div>
<div class="abs gc " style="left:967px;width:928px"><span class="sx">SIGNALETIQUE 2018=1</span></div>
</div>
<div class="abs gtitle" style="left:10px;top:792px;width:1897px;padding-left:2px">Selected Suggestions</div>
<div class="abs gbody" style="left:11px;top:813px;width:1895px;height:298px"></div>
<div class="abs ghead" style="left:11px;top:813px;width:1895px">
<div class="abs gh" style="left:0;width:38px;border:none"><svg viewBox="0 0 15 13" style="left:11px;top:3px;width:15px;height:13px"><rect x="0" y="0" width="15" height="13" fill="#7a7a7a"/><g fill="#fff"><rect x="1.500" y="1.500" width="3.500" height="2.800"/><rect x="6" y="1.500" width="3.500" height="2.800"/><rect x="1.500" y="5.300" width="3.500" height="2.800"/><rect x="6" y="5.300" width="3.500" height="2.800"/><rect x="1.500" y="9.100" width="3.500" height="2.600"/><rect x="6" y="9.100" width="3.500" height="2.600"/></g></svg></div>
<div class="abs gh" style="left:38px;width:100px"><div class="t" style="width:72px"><span class="sx">Supplier</span></div><svg viewBox="0 0 22 9"><text x="0" y="8.600" font-family="Liberation Serif,serif" font-size="11.5" fill="#707070">Σ</text><path d="M13 .9h7.400L17.600 4.200v3.800l-1.800-1V4.200z" fill="none" stroke="#7d7d7d" stroke-width="1"/></svg></div>
<div class="abs gh" style="left:138px;width:100px"><div class="t" style="width:72px"><span class="sx">Item</span></div><svg viewBox="0 0 22 9"><text x="0" y="8.600" font-family="Liberation Serif,serif" font-size="11.5" fill="#707070">Σ</text><path d="M13 .9h7.400L17.600 4.200v3.800l-1.800-1V4.200z" fill="none" stroke="#7d7d7d" stroke-width="1"/></svg></div>
<div class="abs gh" style="left:238px;width:100px"><div class="t" style="width:72px"><span class="sx">Description</span></div><svg viewBox="0 0 22 9"><text x="0" y="8.600" font-family="Liberation Serif,serif" font-size="11.5" fill="#707070">Σ</text><path d="M13 .9h7.400L17.600 4.200v3.800l-1.800-1V4.200z" fill="none" stroke="#7d7d7d" stroke-width="1"/></svg></div>
<div class="abs gh" style="left:338px;width:91px"><div class="t" style="width:63px"><span class="sx">Due Date</span></div><svg viewBox="0 0 22 9"><text x="0" y="8.600" font-family="Liberation Serif,serif" font-size="11.5" fill="#707070">Σ</text><path d="M13 .9h7.400L17.600 4.200v3.800l-1.800-1V4.200z" fill="none" stroke="#7d7d7d" stroke-width="1"/></svg></div>
<div class="abs gh" style="left:429px;width:100px"><div class="t" style="width:72px"><span class="sx">Origin</span></div><svg viewBox="0 0 22 9"><text x="0" y="8.600" font-family="Liberation Serif,serif" font-size="11.5" fill="#707070">Σ</text><path d="M13 .9h7.400L17.600 4.200v3.800l-1.800-1V4.200z" fill="none" stroke="#7d7d7d" stroke-width="1"/></svg></div>
<div class="abs gh" style="left:529px;width:111px"><div class="t" style="width:83px"><span class="sx">Release Date</span></div><svg viewBox="0 0 22 9"><text x="0" y="8.600" font-family="Liberation Serif,serif" font-size="11.5" fill="#707070">Σ</text><path d="M13 .9h7.400L17.600 4.200v3.800l-1.800-1V4.200z" fill="none" stroke="#7d7d7d" stroke-width="1"/></svg></div>
<div class="abs gh" style="left:640px;width:84px"><div class="t" style="width:56px"><span class="sx">Quantity</span></div><svg viewBox="0 0 22 9"><text x="0" y="8.600" font-family="Liberation Serif,serif" font-size="11.5" fill="#707070">Σ</text><path d="M13 .9h7.400L17.600 4.200v3.800l-1.800-1V4.200z" fill="none" stroke="#7d7d7d" stroke-width="1"/></svg></div>
<div class="abs gh" style="left:724px;width:120px"><div class="t" style="width:92px"><span class="sx">Expected delay</span></div><svg viewBox="0 0 22 9"><text x="0" y="8.600" font-family="Liberation Serif,serif" font-size="11.5" fill="#707070">Σ</text><path d="M13 .9h7.400L17.600 4.200v3.800l-1.800-1V4.200z" fill="none" stroke="#7d7d7d" stroke-width="1"/></svg></div>
<div class="abs gh" style="left:844px;width:1051px"><div class="t" style="width:1023px"><span class="sx">Followed</span></div><svg viewBox="0 0 22 9"><text x="0" y="8.600" font-family="Liberation Serif,serif" font-size="11.5" fill="#707070">Σ</text><path d="M13 .9h7.400L17.600 4.200v3.800l-1.800-1V4.200z" fill="none" stroke="#7d7d7d" stroke-width="1"/></svg></div>
</div>
<div class="abs grow" style="left:11px;top:833px;width:1895px">
<div class="abs gc rh" style="left:0;width:38px">1<svg class="abs" style="left:28px;top:6px;width:5px;height:9px" viewBox="0 0 5 9"><path d="M0 0l4.500 4.500L0 9z" fill="#111"/></svg></div>
<div class="abs gc " style="left:38px;width:100px"><span class="sx">BOUCARD</span></div>
<div class="abs gc " style="left:138px;width:100px"><span class="sx">APM170405-4</span></div>
<div class="abs gc u" style="left:238px;width:100px"><span class="sx">Filet Mousse 40/6</span></div>
<div class="abs gc c" style="left:338px;width:91px"><span class="sx">30/05/2019</span></div>
<div class="abs gc u" style="left:429px;width:100px"><span class="sx">Eco. Qty on Requ</span></div>
<div class="abs gc c" style="left:529px;width:111px"><span class="sx">23/05/2019</span></div>
<div class="abs gc r" style="left:640px;width:84px"><span class="sx">2</span></div>
<div class="abs gc " style="left:724px;width:120px"><span class="sx"></span></div>
<div class="abs gc " style="left:844px;width:1051px"><span class="sx">SIGNALETIQUE 2018=1</span></div>
</div>
<div class="abs btn" style="left:10px;top:746px;width:209px;padding-left:18px"><svg style="left:9px;top:13px;width:14px;height:12px" viewBox="0 0 14 12"><path d="M.5 .5h13L7 11.500z" fill="#111"/></svg>Add</div>
<div class="abs btn" style="left:231px;top:746px;width:209px;padding-left:17px"><svg style="left:9px;top:12px;width:15px;height:15px" viewBox="0 0 15 15"><path d="M1 0h13v2H1zM1 3h13L7.500 8.700zM1 8.700h13L7.500 14.500z" fill="#111"/></svg>Add All</div>
<div class="abs btn" style="left:451px;top:746px;width:209px;padding-left:17px"><svg style="left:9px;top:13px;width:14px;height:11px" viewBox="0 0 14 11"><path d="M.5 10.500h13L7 .5z" fill="#111"/></svg>Remove</div>
<div class="abs btn" style="left:672px;top:746px;width:209px;padding-left:17px"><svg style="left:9px;top:12px;width:15px;height:15px" viewBox="0 0 15 15"><path d="M1 15h13v-2H1zM1 12h13L7.500 6.300zM1 6.300h13L7.500 .5z" fill="#111"/></svg>Remove All</div>
<div class="abs btn" style="left:914px;top:746px;width:209px;padding-left:17px"><svg style="left:8px;top:11px;width:18px;height:17px" viewBox="0 0 18 17"><path d="M1.500 9L6 14.800 16.500 1.500" fill="none" stroke="#1a8a1a" stroke-width="3.300"/></svg>Generate</div>
<div class="abs" style="left:1136px;top:747px;width:770px;height:39px;border:1px solid #d4d4d4;background:#f5f5f5"></div>
<div class="abs rad on" style="left:1157.0px;top:760.0px;"></div>
<div class="abs rl" style="left:1176.8px;top:754.5px;font-size:16.3px">Generate the Cde</div>
<div class="abs rad" style="left:1365.0px;top:760.0px;"></div>
<div class="abs rl" style="left:1384.8px;top:754.5px;font-size:16.1px">Gener. Purchase Order</div>
<div class="abs rad" style="left:1568.0px;top:760.0px;"></div>
<div class="abs rl" style="left:1587.8px;top:754.5px;font-size:16.3px">Price Request Gener.</div>
<div class="abs btn" style="left:10px;top:1121px;width:209px;padding-left:18px"><svg style="left:7px;top:10px;width:18px;height:17px" viewBox="0 0 18 17"><path d="M4 5.500A6.400 6.400 0 1 1 2.800 11.500" fill="none" stroke="#e81b23" stroke-width="2.700"/><path d="M.6 1v6.800h6.800z" fill="#e81b23"/></svg>Cancel</div>
<div class="abs btn" style="left:1698px;top:1121px;width:209px;padding-left:15px"><svg style="left:8px;top:11px;width:18px;height:18px" viewBox="0 0 18 18"><path d="M2 2l14 14M16 2L2 16" stroke="#e81b23" stroke-width="4.200"/></svg>Close</div>

<div class="abs" style="left:2px;top:164px;width:1917px;height:1px;background:#fbfbfb"></div>
<!-- window borders -->
<div class="abs" style="left:0;top:164px;width:1px;height:1011px;background:#2e2e2e"></div><div class="abs" style="left:1px;top:164px;width:1px;height:1011px;background:#9a9a9a"></div>
<div class="abs" style="left:1919px;top:164px;width:1px;height:1011px;background:#3c3c3c"></div>
<div class="abs" style="left:0;top:1172px;width:1920px;height:1px;background:#8e8e8e"></div><div class="abs" style="left:0;top:1173px;width:1920px;height:2px;background:#3c3c3c"></div>
</div>
</body>
</html>
